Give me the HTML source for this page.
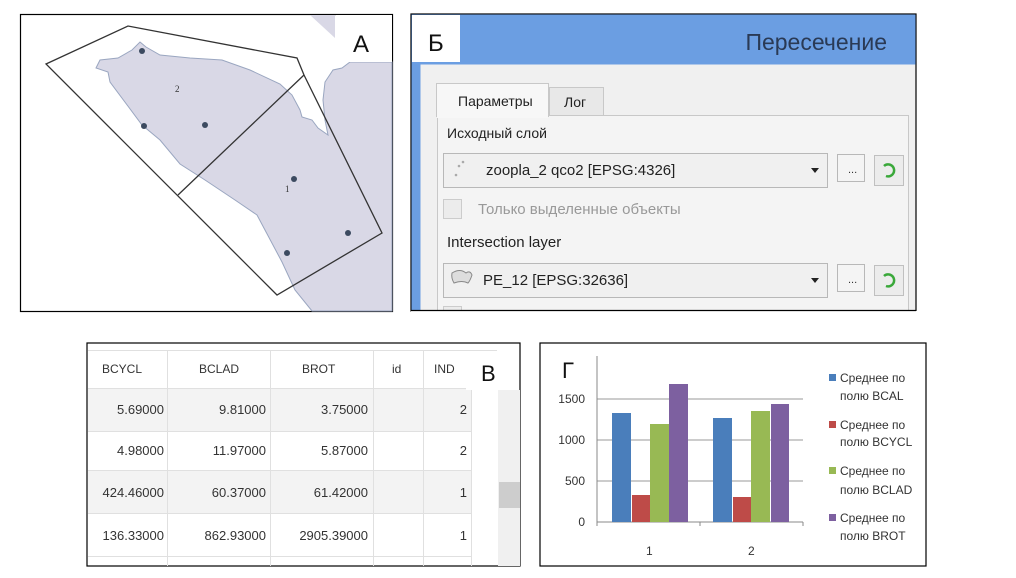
<!DOCTYPE html>
<html><head><meta charset="utf-8"><style>
body{margin:0;width:1016px;height:578px;background:#fff;position:relative;overflow:hidden;font-family:"Liberation Sans","DejaVu Sans",sans-serif}
svg{position:absolute;left:0;top:0}
.t{position:absolute;font-size:13px;color:#222;white-space:nowrap}
</style></head><body>
<svg width="1016" height="578">
<!-- Panel A -->
<rect x="20.5" y="14.5" width="372" height="297" fill="#fff" stroke="#000" stroke-width="1.2"/>
<path d="M140,42 L146,47 L160,55 L190,58 L222,60 L250,70 L280,84 L292,95 L300,110 L302,117 L312,120 L318,128 L328,135 L325,120 L323,100 L325,82 L333,70 L342,68 L350,62 L392,62 L392,311 L312,311 L295,290 L282,262 L257,215 L235,200 L205,180 L180,164 L160,140 L142,125 L110,82 L108,72 L96,68 L100,60 L118,58 L132,50 Z" fill="#d9d8e6" stroke="#9aa6c0" stroke-width="1"/>
<path d="M310,15 L335,15 L335,38 Z" fill="#d9d8e6"/>
<path d="M46,64 L128,26 L297,58 L304,75 L382,233 L277,295 Z" fill="none" stroke="#333" stroke-width="1.3"/>
<path d="M304,75 L178,195" stroke="#333" stroke-width="1.3"/>
<g fill="#3c4a60"><circle cx="142" cy="51" r="3"/><circle cx="144" cy="126" r="3"/><circle cx="205" cy="125" r="3"/><circle cx="294" cy="179" r="3"/><circle cx="348" cy="233" r="3"/><circle cx="287" cy="253" r="3"/></g>
<text x="175" y="92" font-size="9" fill="#333" font-family="Liberation Serif">2</text>
<text x="285" y="192" font-size="9" fill="#333" font-family="Liberation Serif">1</text>
<rect x="336" y="15" width="56" height="47" fill="#fff"/>
<text x="353" y="52" font-size="24" fill="#111">A</text>

<!-- Panel Б -->
<rect x="411" y="14" width="505" height="297" fill="#f0f0f0" stroke="#000" stroke-width="1.2"/>
<rect x="411.5" y="14.5" width="504" height="50" fill="#6b9ee2"/>
<rect x="411.5" y="14.5" width="9" height="296" fill="#6b9ee2"/>
<rect x="412" y="15" width="48" height="47" fill="#fff"/>
<text x="428" y="51" font-size="24" fill="#111">Б</text>
<text x="887" y="50" font-size="23" fill="#2a3a55" text-anchor="end">Пересечение</text>
<rect x="437.5" y="115.5" width="471" height="195" fill="#f4f4f4" stroke="#c8c8c8"/>
<rect x="549.5" y="87.5" width="54" height="28" fill="#e8e8e8" stroke="#c8c8c8"/>
<rect x="436.5" y="83.5" width="112" height="33" fill="#f7f7f7" stroke="#c8c8c8"/>
<rect x="437" y="114" width="111" height="4" fill="#f7f7f7"/>
<rect x="443.5" y="153.5" width="384" height="34" fill="#f0f0f0" stroke="#b8b8b8"/>
<rect x="443.5" y="263.5" width="384" height="34" fill="#f0f0f0" stroke="#b8b8b8"/>
<path d="M811,168 h8 l-4,5 z M811,278 h8 l-4,5 z" fill="#222"/>
<rect x="837.5" y="154.5" width="27" height="27" fill="#f4f4f4" stroke="#b8b8b8"/>
<rect x="837.5" y="264.5" width="27" height="27" fill="#f4f4f4" stroke="#b8b8b8"/>
<rect x="874.5" y="155.5" width="29" height="30" fill="#ececec" stroke="#c0c0c0"/>
<rect x="874.5" y="265.5" width="29" height="30" fill="#ececec" stroke="#c0c0c0"/>
<g fill="none" stroke="#3aa83a" stroke-width="2.5"><path d="M884,166 a6,6 0 1 1 2,10"/><path d="M884,276 a6,6 0 1 1 2,10"/></g>
<text x="848" y="173" font-size="11" fill="#333">...</text>
<text x="848" y="283" font-size="11" fill="#333">...</text>
<rect x="443.5" y="199.5" width="18" height="19" fill="#ececec" stroke="#ccc"/>
<rect x="443.5" y="306.5" width="18" height="5" fill="#ececec" stroke="#ccc"/>
<rect x="411" y="311" width="506" height="2" fill="#fff"/>
<path d="M411,310.5H916" stroke="#000" stroke-width="1.2"/>
<g fill="#aaa"><circle cx="459" cy="166" r="1.3"/><circle cx="463" cy="162" r="1.3"/><circle cx="456" cy="175" r="1.3"/></g>
<path d="M452,273 q8,-5 14,0 q4,-3 6,2 q-2,6 -4,8 q-6,-3 -14,0 q-3,-5 -2,-10 z" fill="#ddd" stroke="#888"/>

<!-- Panel В -->
<rect x="87" y="343" width="433" height="223" fill="#fff" stroke="#000" stroke-width="1.2"/>
<rect x="88" y="388" width="384" height="43" fill="#f3f3f3"/>
<rect x="88" y="470" width="384" height="43" fill="#f3f3f3"/>
<g stroke="#e0e0e0"><path d="M88,350.5 H497 M88,388.5H472 M88,431.5H472 M88,470.5H472 M88,513.5H472 M88,556.5H472 M167.5,350V566 M270.5,350V566 M373.5,350V566 M423.5,350V566 M471.5,350V566"/></g>
<rect x="498" y="390" width="22" height="176" fill="#f0f0f0"/>
<rect x="499" y="482" width="21" height="26" fill="#cdcdcd"/>
<rect x="466" y="351" width="53" height="39" fill="#fff"/>
<text x="481" y="381" font-size="22" fill="#111">B</text>
<g font-size="12" fill="#333"><text x="102" y="373">BCYCL</text><text x="199" y="373">BCLAD</text><text x="302" y="373">BROT</text><text x="392" y="373">id</text><text x="434" y="373">IND</text></g>
<g font-size="13" fill="#333" text-anchor="end">
<text x="164" y="414">5.69000</text><text x="266" y="414">9.81000</text><text x="368" y="414">3.75000</text><text x="467" y="414">2</text>
<text x="164" y="455">4.98000</text><text x="266" y="455">11.97000</text><text x="368" y="455">5.87000</text><text x="467" y="455">2</text>
<text x="164" y="497">424.46000</text><text x="266" y="497">60.37000</text><text x="368" y="497">61.42000</text><text x="467" y="497">1</text>
<text x="164" y="540">136.33000</text><text x="266" y="540">862.93000</text><text x="368" y="540">2905.39000</text><text x="467" y="540">1</text>
</g>

<!-- Panel Г -->
<rect x="540" y="343" width="386" height="223" fill="#fff" stroke="#000" stroke-width="1.2"/>
<g stroke="#999" fill="none"><path d="M597,399H803 M597,440H803 M597,481H803"/><path d="M597,356V522 H803 M700,522v4 M803,522v4 M597,522v4" stroke="#888"/></g>
<text x="562" y="378" font-size="22" fill="#111">Г</text>
<g font-size="12" fill="#333" text-anchor="end"><text x="585" y="403">1500</text><text x="585" y="444">1000</text><text x="585" y="485">500</text><text x="585" y="526">0</text></g>
<g font-size="12" fill="#333"><text x="646" y="555">1</text><text x="748" y="555">2</text></g>
<rect x="612" y="413" width="19" height="109" fill="#4a7ebb"/>
<rect x="632" y="495" width="18" height="27" fill="#be4b48"/>
<rect x="650" y="424" width="19" height="98" fill="#98b954"/>
<rect x="669" y="384" width="19" height="138" fill="#7d60a0"/>
<rect x="713" y="418" width="19" height="104" fill="#4a7ebb"/>
<rect x="733" y="497" width="18" height="25" fill="#be4b48"/>
<rect x="751" y="411" width="19" height="111" fill="#98b954"/>
<rect x="771" y="404" width="18" height="118" fill="#7d60a0"/>
<rect x="829" y="374" width="7" height="7" fill="#4a7ebb"/>
<rect x="829" y="421" width="7" height="7" fill="#be4b48"/>
<rect x="829" y="467" width="7" height="7" fill="#98b954"/>
<rect x="829" y="514" width="7" height="7" fill="#7d60a0"/>
<g font-size="12" fill="#333">
<text x="840" y="382">Среднее по</text><text x="840" y="400">полю BCAL</text>
<text x="840" y="429">Среднее по</text><text x="840" y="446">полю BCYCL</text>
<text x="840" y="475">Среднее по</text><text x="840" y="494">полю BCLAD</text>
<text x="840" y="522">Среднее по</text><text x="840" y="540">полю BROT</text>
</g>
</svg>
<div class="t" style="left:458px;top:93px;font-size:14px">Параметры</div>
<div class="t" style="left:564px;top:94px;font-size:14px">Лог</div>
<div class="t" style="left:447px;top:125px;font-size:14px">Исходный слой</div>
<div class="t" style="left:486px;top:162px;font-size:15px">zoopla_2 qco2 [EPSG:4326]</div>
<div class="t" style="left:478px;top:201px;font-size:15px;color:#999">Только выделенные объекты</div>
<div class="t" style="left:447px;top:234px;font-size:15px">Intersection layer</div>
<div class="t" style="left:483px;top:272px;font-size:15px">PE_12 [EPSG:32636]</div>
</body></html>
